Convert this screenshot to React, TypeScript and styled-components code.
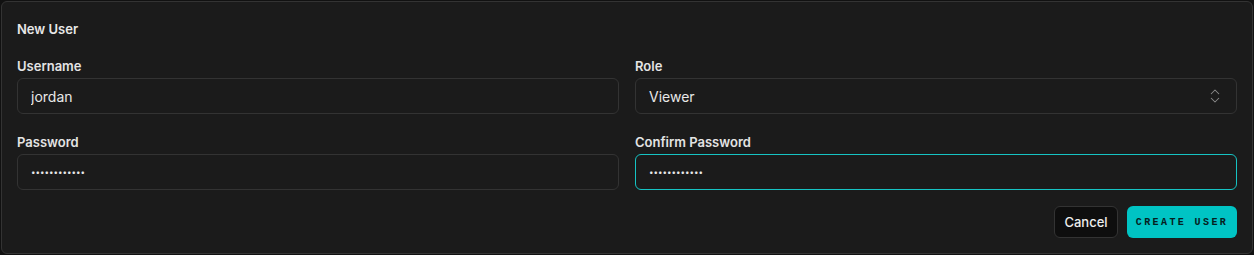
import React from 'react'
import styled, { createGlobalStyle } from 'styled-components'
import { ChevronsUpDown } from 'lucide-react'

const GlobalStyle = createGlobalStyle`
  html, body {
    margin: 0;
    background: #111111;
  }
  body {
    font-family: Inter, "Noto Sans", "Liberation Sans", sans-serif;
    color: #e6e6e6;
  }
  #root {
    padding: 1px;
  }
`

const Card = styled.form`
  background: #1b1b1b;
  border: 1px solid #333333;
  border-radius: 6px;
  padding: 15px;
  height: 253px;
  box-sizing: border-box;
  display: flex;
  flex-direction: column;
`

const Title = styled.h2`
  margin: 2px 0 18px;
  font-size: 13px;
  line-height: 20px;
  font-weight: 600;
  color: #e8e8e8;
`

const FieldGrid = styled.div`
  display: grid;
  grid-template-columns: 1fr 1fr;
  column-gap: 16px;
  row-gap: 19px;
`

const Field = styled.label`
  display: flex;
  flex-direction: column;
  gap: 3px;
`

const Label = styled.span`
  font-size: 13px;
  line-height: 18px;
  font-weight: 600;
  color: #e4e4e4;
`

const Input = styled.input<{ $focused?: boolean }>`
  box-sizing: border-box;
  height: 36px;
  width: 100%;
  padding: 0 13px;
  background: #1b1b1b;
  border: 1px solid ${p => (p.$focused ? '#16c3c3' : '#333333')};
  border-radius: 6px;
  color: #e8e8e8;
  font-family: inherit;
  font-size: 14px;
  outline: none;

  &[type='password'] {
    font-size: 8px;
  }
`

const SelectBox = styled.div`
  box-sizing: border-box;
  height: 36px;
  padding: 0 12px 0 13px;
  background: #1b1b1b;
  border: 1px solid #333333;
  border-radius: 6px;
  display: flex;
  align-items: center;
  justify-content: space-between;
  font-size: 14px;
  color: #e8e8e8;

  svg {
    color: #8a8a8a;
  }
`

const Actions = styled.div`
  margin-top: 16px;
  display: flex;
  justify-content: flex-end;
  gap: 9px;
`

const CancelButton = styled.button`
  height: 32px;
  width: 64px;
  padding: 0;
  background: #0e0e0e;
  border: 1px solid #333333;
  border-radius: 6px;
  color: #eeeeee;
  font-family: inherit;
  font-size: 13px;
  font-weight: 500;
`

const CreateButton = styled.button`
  height: 32px;
  width: 110px;
  background: #00c4c4;
  border: none;
  border-radius: 6px;
  color: #062020;
  font-family: "Liberation Mono", "DejaVu Sans Mono", monospace;
  font-size: 10px;
  font-weight: 700;
  letter-spacing: 2.4px;
  text-transform: uppercase;
`

const App: React.FC = () => {
  return (
    <>
      <GlobalStyle />
      <Card onSubmit={event => event.preventDefault()}>
        <Title>New User</Title>
        <FieldGrid>
          <Field>
            <Label>Username</Label>
            <Input type="text" defaultValue="jordan" />
          </Field>
          <Field>
            <Label>Role</Label>
            <SelectBox>
              <span>Viewer</span>
              <ChevronsUpDown size={18} strokeWidth={1.4} />
            </SelectBox>
          </Field>
          <Field>
            <Label>Password</Label>
            <Input type="password" defaultValue="password1234" />
          </Field>
          <Field>
            <Label>Confirm Password</Label>
            <Input type="password" defaultValue="password1234" $focused />
          </Field>
        </FieldGrid>
        <Actions>
          <CancelButton type="button">Cancel</CancelButton>
          <CreateButton type="submit">Create User</CreateButton>
        </Actions>
      </Card>
    </>
  )
}

export default App
